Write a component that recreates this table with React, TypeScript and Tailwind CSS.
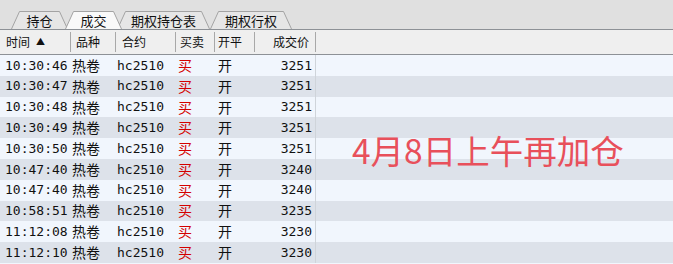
import React from "react";

const rows = [
  ["10:30:46", "3251"],
  ["10:30:47", "3251"],
  ["10:30:48", "3251"],
  ["10:30:49", "3251"],
  ["10:30:50", "3251"],
  ["10:47:40", "3240"],
  ["10:47:40", "3240"],
  ["10:58:51", "3235"],
  ["11:12:08", "3230"],
  ["11:12:10", "3230"],
];

const cjk = { fontFamily: '"Noto Sans CJK SC", "Noto Sans", sans-serif' };
const mono = { fontFamily: '"DejaVu Sans Mono", "Liberation Mono", monospace' };

function Tab({ label, width, selected, ml }: { label: string; width: number; selected?: boolean; ml: number }) {
  return (
    <div
      className={`relative flex h-[18px] items-center justify-center text-[13px] text-[#111] ${selected ? "z-10" : ""}`}
      style={{ width, marginLeft: ml, ...cjk }}
    >
      <svg className="absolute inset-0" width={width} height={18} viewBox={`0 0 ${width} 18`}>
        <path
          d={`M0.5 18 L8.5 0.5 L${width - 8.5} 0.5 L${width - 0.5} 18`}
          fill={selected ? "#f9f9f9" : "#e6e6e6"}
          stroke="#a3a3a3"
          strokeWidth="1"
        />
      </svg>
      <span className="relative leading-none">{label}</span>
    </div>
  );
}

export default function App() {
  return (
    <div className="relative h-[264px] w-[673px] overflow-hidden bg-[#f1f6fd]">
      <div className="flex h-[29px] items-end bg-[#e0e0e0] pl-[11px]">
        <Tab label="持仓" width={57} ml={0} />
        <Tab label="成交" width={57} ml={-3} selected />
        <Tab label="期权持仓表" width={93} ml={-5} />
        <Tab label="期权行权" width={82} ml={0} />
      </div>
      <div className="h-px bg-[#8d9196]" />
      <div className="flex h-[24px] items-center bg-[#efefef] text-[12px] text-[#111]" style={cjk}>
        <div className="flex h-[20px] w-[71px] items-center gap-[6px] border-r border-[#a8a8a8] pl-[6px]">
          时间<span className="text-[9px]">▲</span>
        </div>
        <div className="flex h-[20px] w-[45px] items-center border-r border-[#a8a8a8] pl-[5px]">品种</div>
        <div className="flex h-[20px] w-[60px] items-center border-r border-[#a8a8a8] pl-[6px]">合约</div>
        <div className="flex h-[20px] w-[39px] items-center border-r border-[#a8a8a8] pl-[4px]">买卖</div>
        <div className="flex h-[20px] w-[40px] items-center border-r border-[#a8a8a8] pl-[3px]">开平</div>
        <div className="flex h-[20px] w-[61px] items-center justify-end border-r border-[#a8a8a8] pr-[6px]">成交价</div>
      </div>
      <div className="h-px bg-[#8d9196]" />
      <div className="flex flex-col">
        {rows.map(([t, p], i) => (
          <div
            key={i}
            className={`flex h-[20.8px] shrink-0 items-center text-[#111] ${i % 2 === 1 ? "bg-[#dde2ea]" : "bg-[#f1f6fd]"}`}
          >
            <div className="w-[71px] pl-[5px] text-[13px]" style={mono}>{t}</div>
            <div className="w-[45px] pl-[1px] text-[14px]" style={cjk}>热卷</div>
            <div className="w-[60px] pl-[1px] text-[13px]" style={mono}>hc2510</div>
            <div className="w-[39px] pl-[2px] text-[14px] text-[#d40000]" style={cjk}>买</div>
            <div className="w-[40px] pl-[3px] text-[14px]" style={cjk}>开</div>
            <div className="flex h-full w-[61px] items-center justify-end border-r border-[#cfd4da] pr-[3px] text-[13px]" style={mono}>{p}</div>
          </div>
        ))}
      </div>
      <div
        className="absolute left-[352px] top-[133px] text-[33.5px] leading-none text-[#e8505b]"
        style={cjk}
      >
        4月8日上午再加仓
      </div>
    </div>
  );
}
